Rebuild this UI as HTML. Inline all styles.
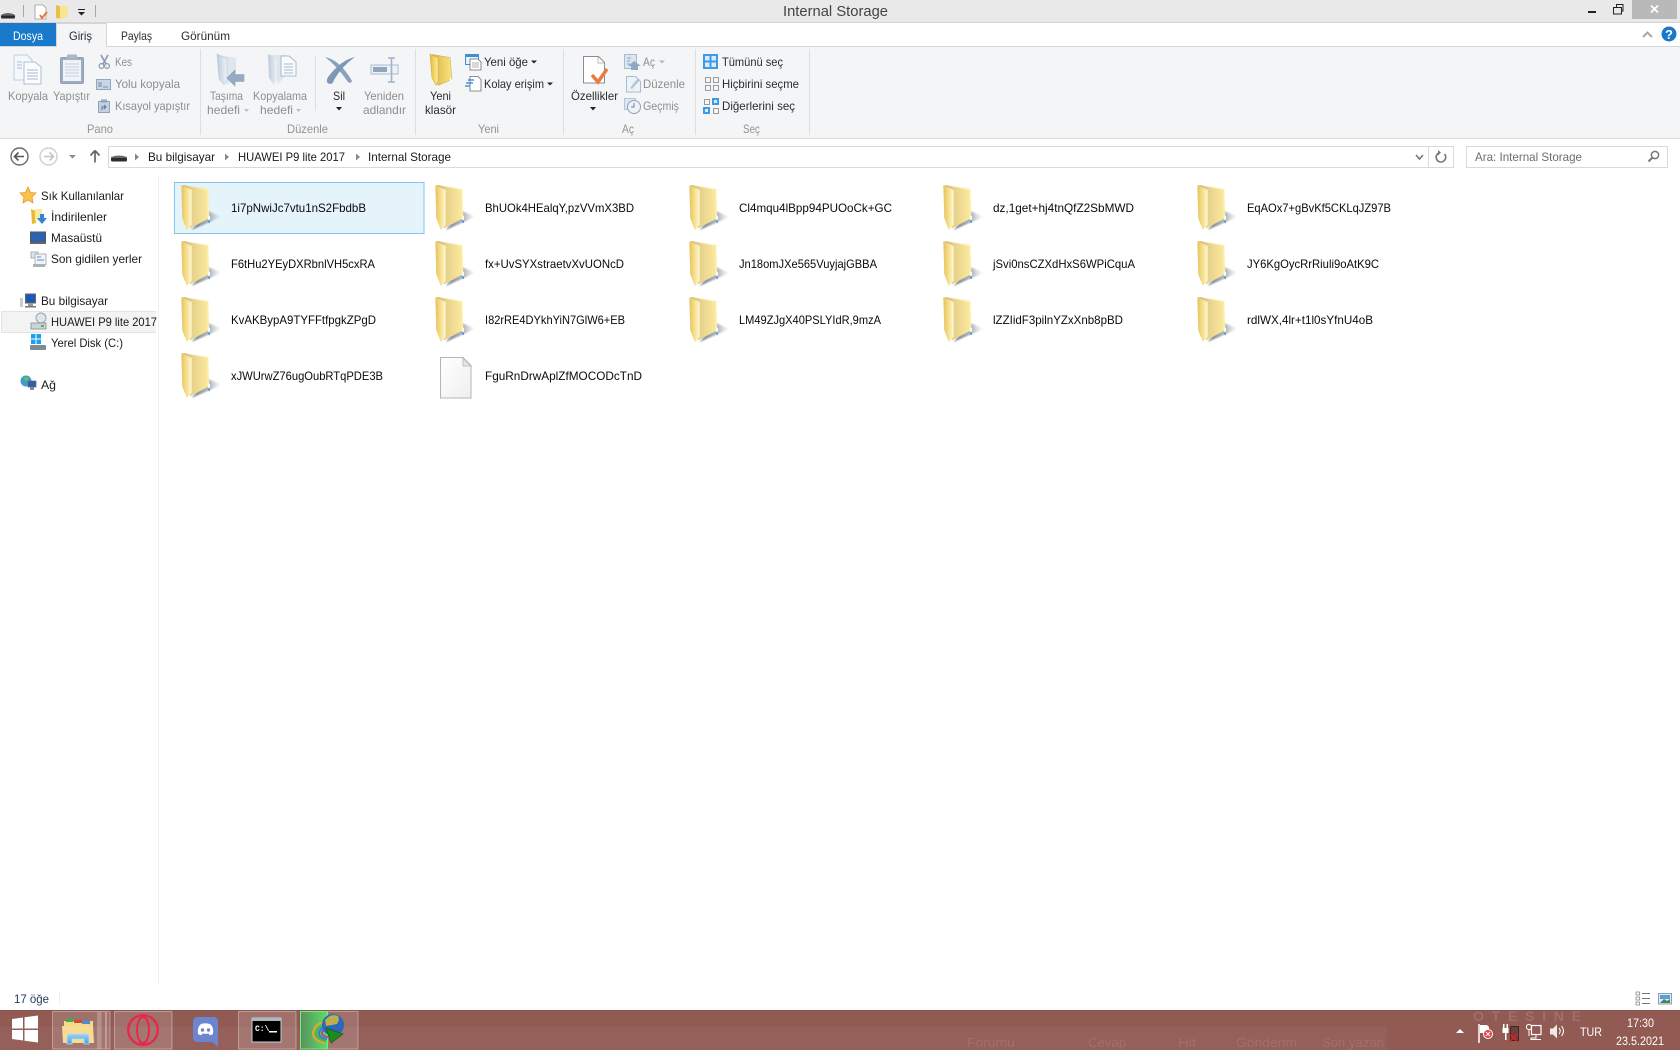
<!DOCTYPE html>
<html lang="tr"><head><meta charset="utf-8"><title>Internal Storage</title>
<style>
html,body{margin:0;padding:0;background:#fff;width:1680px;height:1050px;overflow:hidden}
svg{display:block;position:absolute;left:0;top:0}
text{font-family:"Liberation Sans",sans-serif;font-size:12px;fill:#0a0a0a}
.g{fill:#8e8e8e}.l{fill:#939393}.d{fill:#2b2b2b}.n{fill:#1a1a1a}.w{fill:#fff}
.gh{fill:#a56e6a;font-size:13px}
</style></head><body>
<svg width="1680" height="1050" viewBox="0 0 1680 1050" xmlns="http://www.w3.org/2000/svg">
<defs>
<linearGradient id="fb" x1="0" y1="0" x2="1" y2="0"><stop offset="0" stop-color="#c9b273"/><stop offset=".35" stop-color="#e6d18a"/><stop offset="1" stop-color="#fdeb9e"/></linearGradient>
<linearGradient id="ff" x1="0" y1="0" x2="1" y2="0"><stop offset="0" stop-color="#e6c25c"/><stop offset=".6" stop-color="#f8e497"/><stop offset="1" stop-color="#fff8d8"/></linearGradient>
<linearGradient id="fs" x1="0" y1="0" x2="1" y2="0"><stop offset="0" stop-color="#5d6a76" stop-opacity=".85"/><stop offset=".6" stop-color="#7d8a96" stop-opacity=".6"/><stop offset="1" stop-color="#aab" stop-opacity="0"/></linearGradient>
<linearGradient id="pg" x1="0" y1="0" x2="1" y2="1"><stop offset="0" stop-color="#fff"/><stop offset="1" stop-color="#efefef"/></linearGradient>
<linearGradient id="yf" x1="0" y1="0" x2="1" y2="0"><stop offset="0" stop-color="#e9bb35"/><stop offset=".7" stop-color="#f8dc76"/><stop offset="1" stop-color="#fff2b4"/></linearGradient>
<linearGradient id="yb" x1="0" y1="0" x2="1" y2="0"><stop offset="0" stop-color="#d8b548"/><stop offset="1" stop-color="#fbe480"/></linearGradient>
<linearGradient id="gf" x1="0" y1="0" x2="1" y2="0"><stop offset="0" stop-color="#bccad9"/><stop offset="1" stop-color="#eef2f6"/></linearGradient>
<linearGradient id="dc" x1="0" y1="0" x2="0" y2="1"><stop offset="0" stop-color="#9cd3f0"/><stop offset="1" stop-color="#4aa0dc"/></linearGradient>
<linearGradient id="pr" x1="0" y1="0" x2="1" y2="0"><stop offset="0" stop-color="#5a9060"/><stop offset="1" stop-color="#5adf66"/></linearGradient>
<filter id="bl" x="-20%" y="-20%" width="140%" height="140%"><feGaussianBlur stdDeviation=".9"/></filter>
<symbol id="folder" width="42" height="46" viewBox="0 0 42 46">
<polygon points="27,26 40.700,31.700 10.700,45" fill="url(#fs)" filter="url(#bl)"/>
<polygon points="2,0 27.300,4 28.300,33.300 9,43.300" fill="url(#fb)"/>
<polygon points="3,0.400 27.300,4 28.300,33.300 26.800,34 25.800,5.500" fill="#fff3b5" opacity=".6"/>
<polygon points="0.300,0 10.700,5 10.700,40 5.700,45 1.300,33.300" fill="url(#ff)"/>
<rect x="27.300" y="31" width="1.600" height="4" fill="#fff"/><rect x="27.300" y="35" width="1.600" height="3" fill="#5b9bd5"/>
</symbol>
</defs>

<!-- title bar -->
<rect x="0" y="0" width="1680" height="22" fill="#e9e9e9"/>
<rect x="0" y="22" width="1680" height="1" fill="#d4d4d4"/>
<path d="M1 15q7-4 14 0v2h-14z" fill="#6a6a6a"/><rect x="1" y="15.500" width="14" height="3" rx="1" fill="#2c2c2c"/>
<rect x="23" y="5" width="1" height="12" fill="#a8a8a8"/>
<path d="M35 5h8l3 3v11h-11z" fill="#fff" stroke="#9a9a9a" stroke-width=".8"/><path d="M40 15l2 3 5-6" fill="none" stroke="#e8743b" stroke-width="2"/>
<path d="M56 5l7 2v12l-7-1z" fill="#ecc13f"/><path d="M60 6h8v10l-6 3h-2z" fill="#f8e596"/>
<rect x="78" y="9" width="7" height="1" fill="#222"/><path d="M78 12h7l-3.500 3.500z" fill="#222"/>
<rect x="95" y="5" width="1" height="12" fill="#a8a8a8"/>
<text x="783" y="16" style="font-size:14.500px;fill:#444" textLength="105" lengthAdjust="spacingAndGlyphs">Internal Storage</text>
<rect x="1588" y="11" width="8" height="2" fill="#222"/>
<rect x="1613.500" y="7.500" width="8" height="6.500" fill="none" stroke="#222"/><path d="M1616.500 7V4.500h6.500V11h-1.500" fill="none" stroke="#222"/>
<rect x="1632" y="0" width="45" height="19" fill="#b9b9b9"/>
<path d="M1651 5.500l7 7M1658 5.500l-7 7" stroke="#fff" stroke-width="1.700"/>

<!-- tabs row -->
<rect x="0" y="23" width="1680" height="23" fill="#fff"/>
<rect x="0" y="46" width="1680" height="1" fill="#d6d6d6"/>
<rect x="0" y="23" width="56" height="23" fill="#1979ca"/>
<text x="13" y="40" class="w" textLength="30" lengthAdjust="spacingAndGlyphs">Dosya</text>
<rect x="56.500" y="23.500" width="50" height="24" fill="#f4f5f7" stroke="#d6d6d6"/>
<rect x="57" y="46" width="49" height="2" fill="#f4f5f7"/>
<text x="69" y="40" class="d" textLength="23" lengthAdjust="spacingAndGlyphs">Giriş</text>
<text x="121" y="40" class="d" textLength="31" lengthAdjust="spacingAndGlyphs">Paylaş</text>
<text x="181" y="40" class="d" textLength="49" lengthAdjust="spacingAndGlyphs">Görünüm</text>
<path d="M1643 37l4.500-4.500 4.500 4.500" fill="none" stroke="#a8a8a8" stroke-width="2"/>
<circle cx="1669" cy="34" r="7.500" fill="#1a79c9"/>
<text x="1665" y="39" class="w" style="font-size:13px;font-weight:bold">?</text>

<!-- ribbon -->
<rect x="0" y="47" width="1680" height="91" fill="#f4f5f7"/>
<rect x="0" y="138" width="1680" height="1" fill="#d9d9d9"/>
<rect x="200" y="49" width="1" height="86" fill="#dcdee1"/><rect x="415" y="49" width="1" height="86" fill="#dcdee1"/><rect x="563" y="49" width="1" height="86" fill="#dcdee1"/><rect x="695" y="49" width="1" height="86" fill="#dcdee1"/><rect x="809" y="49" width="1" height="86" fill="#dcdee1"/>
<rect x="315" y="56" width="1" height="55" fill="#dcdee1"/>

<!-- Kopyala -->
<path d="M14 55h13l5 5v20h-18z" fill="#f5f8fb" stroke="#bfcfe0"/><path d="M24 62h11l6 5v17h-17z" fill="#fbfcfe" stroke="#aebfd3"/>
<path d="M27 70h11M27 73h11M27 76h11M27 79h11M17 62h5M17 65h5M17 68h5" stroke="#a9b9cc"/>
<!-- Yapistir -->
<rect x="60.500" y="57.500" width="23" height="26" rx="1.500" fill="#9fadc0" stroke="#8f9fb5"/><rect x="63" y="60" width="18" height="21" fill="#f0f4f9"/>
<path d="M65 64h14M65 67h14M65 70h14M65 73h14M65 76h14" stroke="#c2cfdd"/><rect x="67" y="54.500" width="10" height="4.500" rx="1" fill="#a9b6c7"/>
<!-- Kes -->
<path d="M101 55l5 9M108 55l-5 9" stroke="#8b99ad" stroke-width="1.600"/><circle cx="101.500" cy="66" r="2.400" fill="none" stroke="#8b99ad" stroke-width="1.200"/><circle cx="107" cy="66" r="2.400" fill="none" stroke="#8b99ad" stroke-width="1.200"/>
<text x="115" y="66" class="g" textLength="17" lengthAdjust="spacingAndGlyphs">Kes</text>
<!-- Yolu -->
<rect x="96.500" y="79.500" width="14" height="10" fill="#c9d6e6" stroke="#93a6bf"/><path d="M99 82v5M101 82v5M103 87h5" stroke="#5f7591" stroke-width=".8"/>
<text x="115" y="88" class="g" textLength="65" lengthAdjust="spacingAndGlyphs">Yolu kopyala</text>
<!-- Kisayol -->
<rect x="98.500" y="101.500" width="11" height="11" fill="#c3d0df" stroke="#8fa2ba"/><rect x="101" y="99.500" width="6" height="3" fill="#8fa2ba"/><path d="M102 110v-3h4M104 105l2 2-2 2" stroke="#56779c" fill="none"/>
<text x="115" y="110" class="g" textLength="75" lengthAdjust="spacingAndGlyphs">Kısayol yapıştır</text>
<text x="8" y="100" class="g" textLength="40" lengthAdjust="spacingAndGlyphs">Kopyala</text>
<text x="53" y="100" class="g" textLength="37" lengthAdjust="spacingAndGlyphs">Yapıştır</text>
<text x="87" y="133" class="l" textLength="26" lengthAdjust="spacingAndGlyphs">Pano</text>
<!-- Tasima -->
<path d="M218 55l18 3v20l-9 7z" fill="#dfe6ee"/><path d="M217 54l10 4.500v22l-3 4-5-6z" fill="url(#gf)" stroke="#bac8d8" stroke-width=".6"/>
<path d="M244 74.500h-9v-4.500l-8 8 8 8v-4.500h9z" fill="#96abc3" stroke="#87a0ba" stroke-width=".6"/>
<text x="210" y="100" class="g" textLength="33" lengthAdjust="spacingAndGlyphs">Taşıma</text>
<text x="207" y="114" class="g" textLength="33" lengthAdjust="spacingAndGlyphs">hedefi</text><path d="M244 109h5l-2.500 3z" fill="#bdbdbd"/>
<!-- Kopyalama -->
<path d="M270 55h16v20l-8 9z" fill="#dde5ee"/><path d="M268 54l9 4v22l-3 5-5-7z" fill="url(#gf)"/>
<path d="M281 56h8l7 6v14h-15z" fill="#f8fafc" stroke="#aabbcf"/><path d="M284 64h9M284 67h9M284 70h9M284 73h9" stroke="#a9b9cc"/>
<text x="253" y="100" class="g" textLength="54" lengthAdjust="spacingAndGlyphs">Kopyalama</text>
<text x="260" y="114" class="g" textLength="33" lengthAdjust="spacingAndGlyphs">hedefi</text><path d="M296 109h5l-2.500 3z" fill="#bdbdbd"/>
<!-- Sil -->
<path d="M325 57Q340 60 352 81Q351 84 348 82Q337 66 325 57z" fill="#8aa1bc"/>
<path d="M355 57Q341 60 328 77Q325 83 330 84Q333 84 334 80Q342 66 355 57z" fill="#7e97b5"/>
<text x="333" y="100" class="d" textLength="12" lengthAdjust="spacingAndGlyphs">Sil</text><path d="M336 107h6l-3 3.500z" fill="#222"/>
<!-- Yeniden -->
<rect x="371" y="65" width="27" height="9" fill="#eef2f7" stroke="#a9bbcf"/><rect x="373" y="67" width="14" height="5" fill="#90a6c0"/>
<path d="M388 58h7M388 82h7M391.500 58v24" stroke="#9fb2c8" stroke-width="1.600"/>
<text x="364" y="100" class="g" textLength="40" lengthAdjust="spacingAndGlyphs">Yeniden</text>
<text x="363" y="114" class="g" textLength="43" lengthAdjust="spacingAndGlyphs">adlandır</text>
<text x="287" y="133" class="l" textLength="41" lengthAdjust="spacingAndGlyphs">Düzenle</text>
<!-- Yeni klasor -->
<path d="M432 54.500l18 3 2 22-14 6z" fill="url(#yb)" stroke="#cda83e" stroke-width=".5"/><path d="M430 54l8 4v23l-2 4.500-4-7.500z" fill="url(#yf)" stroke="#c79f33" stroke-width=".5"/>
<rect x="450" y="78" width="1.500" height="4" fill="#fff"/>
<text x="430" y="100" class="d" textLength="21" lengthAdjust="spacingAndGlyphs">Yeni</text>
<text x="425" y="114" class="d" textLength="31" lengthAdjust="spacingAndGlyphs">klasör</text>
<!-- Yeni oge -->
<rect x="465.500" y="54.500" width="13" height="10" fill="#e8f1fb" stroke="#3f8fd6"/><rect x="465" y="54" width="14" height="3" fill="#3f8fd6"/>
<path d="M470 59h8l3 3v8h-11z" fill="#fff" stroke="#6d6d6d" stroke-width=".8"/><path d="M472 63h7M472 65h7M472 67h7" stroke="#9a9a9a" stroke-width=".7"/>
<text x="484" y="66" class="d" textLength="44" lengthAdjust="spacingAndGlyphs">Yeni öğe</text><path d="M531 60.500h6l-3 3z" fill="#222"/>
<!-- Kolay -->
<path d="M470 76.500h8l3 3v11.500h-11z" fill="#fff" stroke="#6d6d6d" stroke-width=".8"/>
<path d="M468 80h6M466 83h7M465 86h5" stroke="#2d7fd3" stroke-width="1.200"/>
<text x="484" y="88" class="d" textLength="60" lengthAdjust="spacingAndGlyphs">Kolay erişim</text><path d="M547 82.500h6l-3 3z" fill="#222"/>
<text x="478" y="133" class="l" textLength="21" lengthAdjust="spacingAndGlyphs">Yeni</text>
<!-- Ozellikler -->
<path d="M583.500 56.500h15l6 6v20.500h-21z" fill="#fff" stroke="#8d8d8d"/><path d="M598 57v6h6" fill="none" stroke="#b9b9b9"/>
<path d="M592 75l6 7 9-13" fill="none" stroke="#ea7a44" stroke-width="3.500"/>
<text x="571" y="100" class="d" textLength="47" lengthAdjust="spacingAndGlyphs">Özellikler</text><path d="M590 107h6l-3 3.500z" fill="#222"/>
<!-- Ac -->
<rect x="624.500" y="54.500" width="12" height="14" fill="#dde6f0" stroke="#a9bbcf"/><path d="M627 58h4M627 61h3M627 64h3" stroke="#8ea4bd"/><path d="M631 70v-4h-3l6-5 7 5h-3v4z" fill="#8ea8c6"/>
<text x="643" y="66" class="g" textLength="12" lengthAdjust="spacingAndGlyphs">Aç</text><path d="M659 60.500h6l-3 3z" fill="#b9b9b9"/>
<!-- Duzenle -->
<path d="M626.500 76.500h9l5 5v10.500h-14z" fill="#eef3f8" stroke="#a9bbcf"/><path d="M630 88l8-10 2 2-8 9z" fill="#b4c4d6"/>
<text x="643" y="88" class="g" textLength="42" lengthAdjust="spacingAndGlyphs">Düzenle</text>
<!-- Gecmis -->
<rect x="624.500" y="98.500" width="11" height="11" fill="#dde6f0" stroke="#b6c5d6"/><circle cx="634" cy="107" r="6.500" fill="#f0f3f6" stroke="#8fa2ba"/><path d="M634 103v4h-3" fill="none" stroke="#6b7f98"/>
<text x="643" y="110" class="g" textLength="36" lengthAdjust="spacingAndGlyphs">Geçmiş</text>
<text x="622" y="133" class="l" textLength="12" lengthAdjust="spacingAndGlyphs">Aç</text>
<!-- Sec icons -->
<rect x="703" y="54" width="15" height="15" fill="#3f9ae4"/><rect x="705" y="56" width="4.500" height="4.500" fill="#d9ecfb"/><rect x="711.500" y="56" width="4.500" height="4.500" fill="#d9ecfb"/><rect x="705" y="62.500" width="4.500" height="4.500" fill="#d9ecfb"/><rect x="711.500" y="62.500" width="4.500" height="4.500" fill="#d9ecfb"/>
<rect x="705.500" y="77.500" width="5" height="5" fill="none" stroke="#9a9a9a"/><rect x="713.500" y="77.500" width="5" height="5" fill="none" stroke="#9a9a9a"/><rect x="705.500" y="85.500" width="5" height="5" fill="none" stroke="#9a9a9a"/><rect x="713.500" y="85.500" width="5" height="5" fill="none" stroke="#9a9a9a"/>
<rect x="704.500" y="99.500" width="5" height="5" fill="none" stroke="#9a9a9a"/><rect x="712" y="98" width="7" height="7" fill="#3f9ae4"/><rect x="714" y="100" width="3" height="3" fill="#d9ecfb"/>
<rect x="703" y="107" width="7" height="7" fill="#3f9ae4"/><rect x="705" y="109" width="3" height="3" fill="#d9ecfb"/><rect x="713.500" y="108.500" width="5" height="5" fill="none" stroke="#9a9a9a"/>
<text x="722" y="66" class="d" textLength="61" lengthAdjust="spacingAndGlyphs">Tümünü seç</text>
<text x="722" y="88" class="d" textLength="77" lengthAdjust="spacingAndGlyphs">Hiçbirini seçme</text>
<text x="722" y="110" class="d" textLength="73" lengthAdjust="spacingAndGlyphs">Diğerlerini seç</text>
<text x="743" y="133" class="l" textLength="17" lengthAdjust="spacingAndGlyphs">Seç</text>

<!-- address row -->
<circle cx="19.500" cy="156.500" r="8.500" fill="#fff" stroke="#6a6a6a" stroke-width="1.400"/><path d="M24 156.500h-9M18.500 152.500l-4 4 4 4" fill="none" stroke="#555" stroke-width="1.600"/>
<circle cx="48.500" cy="156.500" r="8.500" fill="#fff" stroke="#cfcfcf" stroke-width="1.400"/><path d="M44 156.500h9M49.500 152.500l4 4-4 4" fill="none" stroke="#c4c4c4" stroke-width="1.600"/>
<path d="M69 155h7l-3.500 3.500z" fill="#8a8a8a"/>
<path d="M95 150.500l-4.500 5M95 150.500l4.500 5M95 151v11.500" fill="none" stroke="#666" stroke-width="1.700"/>
<rect x="108.500" y="146.500" width="1345" height="21" fill="#fff" stroke="#d9d9d9"/>
<rect x="1428" y="147" width="1" height="20" fill="#d9d9d9"/>
<path d="M111 157q8-3 16 0v2h-16z" fill="#6a6a6a"/><rect x="111" y="158" width="16" height="3.500" rx="1.500" fill="#2c2c2c"/>
<path d="M135 153.500l4 3.500-4 3.500z" fill="#888"/><path d="M225 153.500l4 3.500-4 3.500z" fill="#888"/><path d="M356 153.500l4 3.500-4 3.500z" fill="#888"/>
<text x="148" y="161" class="n" textLength="67" lengthAdjust="spacingAndGlyphs">Bu bilgisayar</text>
<text x="238" y="161" class="n" textLength="107" lengthAdjust="spacingAndGlyphs">HUAWEI P9 lite 2017</text>
<text x="368" y="161" class="n" textLength="83" lengthAdjust="spacingAndGlyphs">Internal Storage</text>
<path d="M1416 155l3.500 4 3.500-4" fill="none" stroke="#777" stroke-width="1.600"/>
<path d="M1444.500 154A4.800 4.800 0 1 1 1439 152.800" fill="none" stroke="#777" stroke-width="1.600"/><path d="M1438 150v5.500l3-3z" fill="#777"/>
<rect x="1466.500" y="146.500" width="201" height="21" fill="#fff" stroke="#d9d9d9"/>
<text x="1475" y="161" style="fill:#6d6d6d" textLength="107" lengthAdjust="spacingAndGlyphs">Ara: Internal Storage</text>
<circle cx="1655" cy="155" r="3.600" fill="none" stroke="#777" stroke-width="1.500"/><path d="M1652 158l-3.500 3.500" stroke="#777" stroke-width="2"/>

<!-- sidebar -->
<rect x="158" y="175" width="1" height="810" fill="#f1f1f1"/>
<path d="M28 187l2.500 5.500 5.500.5-4 4 1 6-5-3-5 3 1-6-4-4 5.500-.5z" fill="#f9c24c" stroke="#e59a33" stroke-width=".8"/>
<text x="41" y="200" class="n" textLength="83" lengthAdjust="spacingAndGlyphs">Sık Kullanılanlar</text>
<path d="M31 209l5 2v12l-4 1z" fill="#e9bb35"/><path d="M35 209h7v12h-7z" fill="#fae9a0"/><path d="M40 214h4v4h3l-5 6-5-6h3z" fill="#2f87d8"/>
<text x="51" y="221" class="n" textLength="56" lengthAdjust="spacingAndGlyphs">İndirilenler</text>
<rect x="30.500" y="232" width="15" height="10" fill="#2b62b4" stroke="#555"/><rect x="30" y="242" width="16" height="2" fill="#666"/>
<text x="51" y="242" class="n" textLength="51" lengthAdjust="spacingAndGlyphs">Masaüstü</text>
<rect x="31" y="252" width="7" height="6" fill="#dfe6ed" stroke="#8a98a8" stroke-width=".7"/><rect x="35" y="254" width="11" height="11" fill="#f2f5f8" stroke="#8a98a8" stroke-width=".7"/><path d="M37 257h4M37 260h7" stroke="#5d8bbd"/><rect x="33" y="264" width="12" height="3" fill="#aab2ba"/>
<text x="51" y="263" class="n" textLength="91" lengthAdjust="spacingAndGlyphs">Son gidilen yerler</text>
<rect x="20" y="298" width="3" height="9" fill="#c7ccd2"/><rect x="25.500" y="294" width="10" height="9" fill="#1d57b5" stroke="#666"/><rect x="28" y="303" width="5" height="3" fill="#999"/><rect x="25" y="306" width="11" height="1.500" fill="#777"/>
<text x="41" y="305" class="n" textLength="67" lengthAdjust="spacingAndGlyphs">Bu bilgisayar</text>
<rect x="1.500" y="311.500" width="155" height="21" fill="#f3f3f3" stroke="#e3e3e3"/><rect x="156" y="311" width="2" height="22" fill="#fff"/>
<circle cx="41" cy="318" r="5" fill="#dfe5ea" stroke="#9aa5b0"/><path d="M31 323h15v6h-15z" fill="#cdd3d9" stroke="#7f8a94" stroke-width=".8"/><rect x="41" y="325" width="3" height="2" fill="#59b04d"/>
<text x="51" y="326" class="n" textLength="106" lengthAdjust="spacingAndGlyphs">HUAWEI P9 lite 2017</text>
<rect x="31" y="334" width="4.500" height="4.500" fill="#19a0ef"/><rect x="36.500" y="334" width="4.500" height="4.500" fill="#19a0ef"/><rect x="31" y="339.500" width="4.500" height="4.500" fill="#19a0ef"/><rect x="36.500" y="339.500" width="4.500" height="4.500" fill="#19a0ef"/>
<rect x="30" y="345" width="16" height="5" rx="1" fill="#7f8a94"/>
<text x="51" y="347" class="n" textLength="72" lengthAdjust="spacingAndGlyphs">Yerel Disk (C:)</text>
<circle cx="26" cy="381" r="5.500" fill="#3c9bd6"/><path d="M23 378q3-2 6 0l-2 4z" fill="#6cbf4b"/><rect x="28" y="381" width="8" height="6" fill="#2c5fae" stroke="#666" stroke-width=".7"/><rect x="30" y="387" width="4" height="3" fill="#888"/>
<text x="41" y="389" class="n" textLength="15" lengthAdjust="spacingAndGlyphs">Ağ</text>

<!-- selected -->
<rect x="174.500" y="182.500" width="249.500" height="51" fill="#e5f3fb" stroke="#85c6ef"/>

<!-- folders -->
<use href="#folder" x="181" y="185"/><use href="#folder" x="435" y="185"/><use href="#folder" x="689" y="185"/><use href="#folder" x="943" y="185"/><use href="#folder" x="1197" y="185"/>
<use href="#folder" x="181" y="241"/><use href="#folder" x="435" y="241"/><use href="#folder" x="689" y="241"/><use href="#folder" x="943" y="241"/><use href="#folder" x="1197" y="241"/>
<use href="#folder" x="181" y="297"/><use href="#folder" x="435" y="297"/><use href="#folder" x="689" y="297"/><use href="#folder" x="943" y="297"/><use href="#folder" x="1197" y="297"/>
<use href="#folder" x="181" y="353"/>
<!-- file -->
<path d="M440.500 357.500h22.500l8 8v32.500h-30.500z" fill="url(#pg)" stroke="#b5b5b5"/><path d="M463 358v8h8z" fill="#e4e4e4" stroke="#b5b5b5" stroke-width=".8"/>

<text x="231" y="212" textLength="135" lengthAdjust="spacingAndGlyphs">1i7pNwiJc7vtu1nS2FbdbB</text>
<text x="485" y="212" textLength="149" lengthAdjust="spacingAndGlyphs">BhUOk4HEalqY,pzVVmX3BD</text>
<text x="739" y="212" textLength="153" lengthAdjust="spacingAndGlyphs">Cl4mqu4lBpp94PUOoCk+GC</text>
<text x="993" y="212" textLength="141" lengthAdjust="spacingAndGlyphs">dz,1get+hj4tnQfZ2SbMWD</text>
<text x="1247" y="212" textLength="144" lengthAdjust="spacingAndGlyphs">EqAOx7+gBvKf5CKLqJZ97B</text>
<text x="231" y="268" textLength="144" lengthAdjust="spacingAndGlyphs">F6tHu2YEyDXRbnlVH5cxRA</text>
<text x="485" y="268" textLength="139" lengthAdjust="spacingAndGlyphs">fx+UvSYXstraetvXvUONcD</text>
<text x="739" y="268" textLength="138" lengthAdjust="spacingAndGlyphs">Jn18omJXe565VuyjajGBBA</text>
<text x="993" y="268" textLength="142" lengthAdjust="spacingAndGlyphs">jSvi0nsCZXdHxS6WPiCquA</text>
<text x="1247" y="268" textLength="132" lengthAdjust="spacingAndGlyphs">JY6KgOycRrRiuli9oAtK9C</text>
<text x="231" y="324" textLength="145" lengthAdjust="spacingAndGlyphs">KvAKBypA9TYFFtfpgkZPgD</text>
<text x="485" y="324" textLength="140" lengthAdjust="spacingAndGlyphs">I82rRE4DYkhYiN7GlW6+EB</text>
<text x="739" y="324" textLength="142" lengthAdjust="spacingAndGlyphs">LM49ZJgX40PSLYIdR,9mzA</text>
<text x="993" y="324" textLength="130" lengthAdjust="spacingAndGlyphs">lZZIidF3pilnYZxXnb8pBD</text>
<text x="1247" y="324" textLength="126" lengthAdjust="spacingAndGlyphs">rdlWX,4lr+t1l0sYfnU4oB</text>
<text x="231" y="380" textLength="152" lengthAdjust="spacingAndGlyphs">xJWUrwZ76ugOubRTqPDE3B</text>
<text x="485" y="380" textLength="157" lengthAdjust="spacingAndGlyphs">FguRnDrwAplZfMOCODcTnD</text>

<!-- status -->
<text x="14" y="1003" style="fill:#1e395b" textLength="35" lengthAdjust="spacingAndGlyphs">17 öğe</text>
<rect x="59" y="993" width="1" height="11" fill="#eee"/>
<rect x="1636" y="992" width="3.500" height="3" fill="#fff" stroke="#777" stroke-width=".7"/><rect x="1636" y="997" width="3.500" height="3" fill="#fff" stroke="#777" stroke-width=".7"/><rect x="1636" y="1002" width="3.500" height="3" fill="#fff" stroke="#777" stroke-width=".7"/>
<path d="M1642 993.500h8M1642 998.500h8M1642 1003.500h8" stroke="#777"/>
<rect x="1658.500" y="993.500" width="13" height="10.500" fill="#dcebf6" stroke="#8aa0b4"/><path d="M1660 1003l4-4 3 2 3-2v4z" fill="#4d7d5c"/><rect x="1660" y="995" width="10" height="4" fill="#5b9fd4"/>

<!-- taskbar -->
<rect x="0" y="1010" width="1680" height="40" fill="#915a52"/>
<rect x="0" y="1010" width="1680" height="1" fill="#8b534c"/>
<rect x="0" y="1027" width="1387" height="23" fill="#95605a"/>
<text x="967" y="1047" class="gh" textLength="48" lengthAdjust="spacingAndGlyphs">Forumu</text>
<text x="1088" y="1047" class="gh" textLength="38" lengthAdjust="spacingAndGlyphs">Cevap</text>
<text x="1178" y="1047" class="gh" textLength="18" lengthAdjust="spacingAndGlyphs">Hit</text>
<text x="1236" y="1047" class="gh" textLength="61" lengthAdjust="spacingAndGlyphs">Gönderim</text>
<text x="1322" y="1047" class="gh" textLength="62" lengthAdjust="spacingAndGlyphs">Son yazan</text>
<text x="1473" y="1021" style="fill:#a0706a;font-size:14px;font-weight:bold" textLength="108" lengthAdjust="spacing">OTESINE</text>
<!-- start -->
<path d="M12 1019l11-1.500v11h-11zM24.500 1017.300l13.500-1.800v13h-13.500zM12 1030h11v10.500l-11-1.500zM24.500 1030h13.500v12.500l-13.500-1.800z" fill="#fff"/>
<!-- taskbar buttons -->
<rect x="52.500" y="1011.500" width="53" height="37.500" fill="#fff" fill-opacity=".14" stroke="#fff" stroke-opacity=".35"/>
<rect x="97" y="1012" width="4.500" height="37" fill="#fff" fill-opacity=".22"/>
<rect x="106.500" y="1011.500" width="3.500" height="37.500" fill="#fff" fill-opacity=".14" stroke="#fff" stroke-opacity=".35"/>
<rect x="114.500" y="1011.500" width="57.500" height="37.500" fill="#fff" fill-opacity=".14" stroke="#fff" stroke-opacity=".35"/>
<rect x="238.500" y="1011.500" width="57.500" height="37.500" fill="#fff" fill-opacity=".14" stroke="#fff" stroke-opacity=".35"/>
<rect x="300.500" y="1011.500" width="57.500" height="37.500" fill="#fff" fill-opacity=".14" stroke="#fff" stroke-opacity=".35"/>
<rect x="300.500" y="1011.500" width="27" height="37.500" fill="url(#pr)" stroke="#6df07a"/>
<!-- explorer -->
<rect x="64" y="1021" width="29" height="5" fill="#f4d98a"/><rect x="66" y="1018.500" width="7" height="3.500" fill="#3fae49"/><rect x="74" y="1020" width="8" height="3" fill="#d9472f"/><rect x="82" y="1021" width="8" height="3" fill="#3d8fe0"/>
<path d="M62 1026h31l1 17h-31z" fill="#f6dc92"/><path d="M67 1044v-7q0-3 3-3h16q3 0 3 3v7h-5v-5h-12v5z" fill="url(#dc)" stroke="#b7def5" stroke-width=".8"/>
<!-- opera -->
<circle cx="143" cy="1030" r="14.800" fill="none" stroke="#e8284b" stroke-width="2.400"/><ellipse cx="143" cy="1030" rx="6" ry="13" fill="none" stroke="#e8284b" stroke-width="2"/>
<!-- discord -->
<rect x="193" y="1017" width="25" height="25" rx="4" fill="#6d84cf"/><path d="M212 1042l6 5v-8z" fill="#6d84cf"/>
<path d="M198 1034q-1-7 3-10q4-1.500 9 0q4 3 3 10q-2 1.500-3.500 1l-1-1.500q-3 .8-6 0l-1 1.500q-1.500.5-3.500-1z" fill="#fff"/><circle cx="202.500" cy="1030" r="1.700" fill="#6d84cf"/><circle cx="208.500" cy="1030" r="1.700" fill="#6d84cf"/>
<!-- cmd -->
<rect x="252" y="1018" width="29" height="24" fill="#000" stroke="#c9ced3"/><rect x="252" y="1018" width="29" height="3" fill="#aeb6bd"/>
<text x="255" y="1031" class="w" style="font-family:'Liberation Mono',monospace;font-size:8px;font-weight:bold">C:\</text><rect x="269" y="1031" width="8" height="1.500" fill="#fff"/>
<!-- idm -->
<path d="M329 1021q-14 1-16 12q0 8 12 10" fill="none" stroke="#e9a52a" stroke-width="2"/>
<path d="M331 1023q-12 1-15 10q0 6 10 8" fill="none" stroke="#4fb34a" stroke-width="2"/>
<path d="M331 1025q-10 1-12 8q0 5 8 6" fill="none" stroke="#2f7fd3" stroke-width="2"/>
<path d="M331 1027q-8 1-9 6q0 3 6 4" fill="none" stroke="#c33a8f" stroke-width="1.800"/>
<circle cx="333" cy="1025" r="11" fill="#2a68bd"/><path d="M325 1020q6-7 13-4q2 4-1 8l-5 1-6 1z" fill="#bfae4c"/>
<path d="M326 1028l17 6-12 9z" fill="#1f8a1d" stroke="#0f5f11" stroke-width=".7"/>
<!-- tray -->
<path d="M1456 1033l4-4 4 4z" fill="#fff"/>
<path d="M1479 1024v19" stroke="#fff" stroke-width="1.500"/><path d="M1480 1025h7l2 2v6h-9z" fill="#fff"/><circle cx="1488" cy="1034" r="4.500" fill="#e34141" stroke="#fff"/><path d="M1486 1032l4 4M1490 1032l-4 4" stroke="#fff"/>
<rect x="1503" y="1024" width="1.500" height="4" fill="#fff"/><rect x="1506.500" y="1024" width="1.500" height="4" fill="#fff"/><rect x="1502.500" y="1028" width="6" height="5" fill="#fff"/><rect x="1505" y="1033" width="1.500" height="7" fill="#fff"/>
<rect x="1510.500" y="1026.500" width="8" height="14" fill="#6d3f3a" stroke="#3a2a28"/><path d="M1509 1034l9 8M1518 1034l-9 8" stroke="#d8202a" stroke-width="1.500"/>
<rect x="1531.500" y="1025.500" width="9.500" height="9" fill="none" stroke="#fff" stroke-width="1.200"/><path d="M1536 1035v3h-5v1.500h10" fill="none" stroke="#fff"/><circle cx="1529" cy="1027" r="2.600" fill="none" stroke="#fff"/><path d="M1529 1030v6" stroke="#fff"/>
<path d="M1550 1028.500h3l4-4v14l-4-4h-3z" fill="#f0e9e7"/><path d="M1559 1028q2.500 3 0 6M1561.500 1026q4 5 0 10" fill="none" stroke="#fff"/>
<text x="1580" y="1036" class="w" textLength="22" lengthAdjust="spacingAndGlyphs">TUR</text>
<text x="1627" y="1027" class="w" textLength="27" lengthAdjust="spacingAndGlyphs">17:30</text>
<text x="1616" y="1045" class="w" textLength="48" lengthAdjust="spacingAndGlyphs">23.5.2021</text>
</svg>
</body></html>
